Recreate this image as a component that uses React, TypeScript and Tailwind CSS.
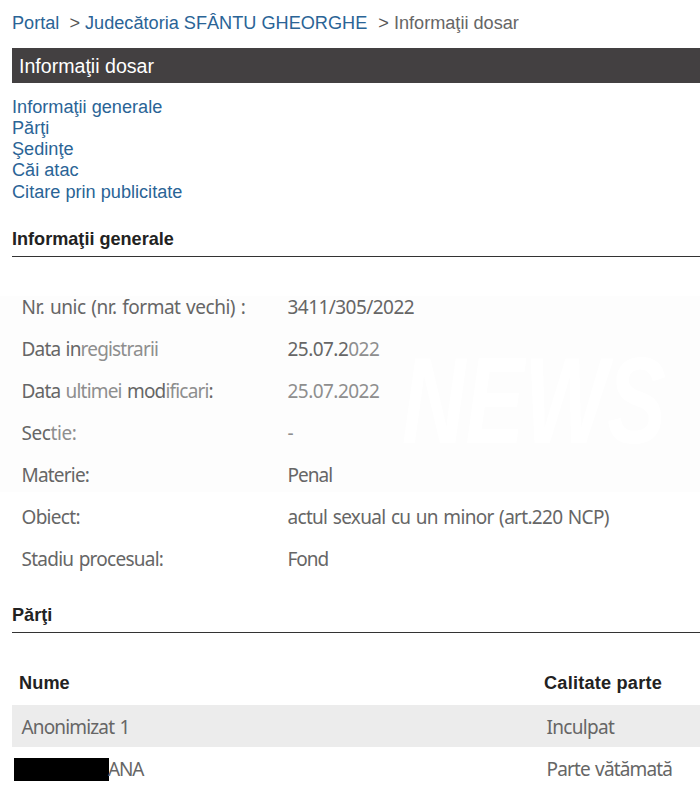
import type { ReactNode } from "react";

const links = ["Informaţii generale", "Părţi", "Şedinţe", "Căi atac", "Citare prin publicitate"];

const Faded = ({ children }: { children: ReactNode }) => <span className="text-[#8e8e8e]">{children}</span>;

type Detail = { label: ReactNode; labelTracking: string; value: ReactNode; valueTracking: string };

const details: Detail[] = [
  {
    label: "Nr. unic (nr. format vechi) :",
    labelTracking: "tracking-[-0.49px]",
    value: "3411/305/2022",
    valueTracking: "tracking-[-0.55px]",
  },
  {
    label: <>Data in<Faded>registrarii</Faded></>,
    labelTracking: "tracking-[-0.82px]",
    value: <>25.07.2<Faded>022</Faded></>,
    valueTracking: "tracking-[-0.54px]",
  },
  {
    label: <>Data <Faded>ultimei</Faded> mod<Faded>ificari</Faded>:</>,
    labelTracking: "tracking-[-0.82px]",
    value: <Faded>25.07.2022</Faded>,
    valueTracking: "tracking-[-0.54px]",
  },
  {
    label: <>Sec<Faded>tie:</Faded></>,
    labelTracking: "tracking-[-0.4px]",
    value: <Faded>-</Faded>,
    valueTracking: "tracking-normal",
  },
  { label: "Materie:", labelTracking: "tracking-[-0.8px]", value: "Penal", valueTracking: "tracking-[-0.95px]" },
  {
    label: "Obiect:",
    labelTracking: "tracking-[-0.7px]",
    value: "actul sexual cu un minor (art.220 NCP)",
    valueTracking: "tracking-[-0.69px]",
  },
  {
    label: "Stadiu procesual:",
    labelTracking: "tracking-[-0.75px]",
    value: "Fond",
    valueTracking: "tracking-[-1px]",
  },
];

function SectionTitle({ children }: { children: ReactNode }) {
  return (
    <h2 className="ml-3 h-[31px] border-b border-[#333] text-[18.1px] leading-[26px] font-bold text-[#222]">
      {children}
    </h2>
  );
}

export default function App() {
  return (
    <main className="relative h-[800px] w-[700px] overflow-hidden bg-white font-['Liberation_Sans',Arial,sans-serif] text-[18.15px] text-[#666]">
      <div aria-hidden="true" className="absolute top-[296px] left-0 h-[196px] w-full bg-[#fdfdfd]">
        <span className="absolute top-[50px] left-[402px] scale-y-[1.4] text-[88px] leading-[110px] font-bold text-white italic">
          NEWS
        </span>
      </div>
      <div className="relative">
        <nav className="flex h-[47px] items-center pl-3 whitespace-pre text-[#2a6496]">
          <a>Portal</a>
          <span className="ml-[10px] text-[#555]">&gt;</span>
          <a className="ml-[5px]">Judecătoria SFÂNTU GHEORGHE</a>
          <span className="ml-[11px] text-[#555]">&gt;</span>
          <span className="ml-[5px] text-[#666]">Informaţii dosar</span>
        </nav>
        <h1 className="mt-px ml-3 h-[35px] bg-[#434041] pl-[7px] text-[19.6px] leading-[36px] text-white">
          Informaţii dosar
        </h1>
        <ul className="mt-[14px] ml-3 h-[105px] text-[#2a6496]">
          {links.map((l) => (
            <li key={l} className="h-[21.15px] leading-[21.15px]">{l}</li>
          ))}
        </ul>
        <div className="mt-[24px]"><SectionTitle>Informaţii generale</SectionTitle></div>
        <dl className="mt-[29.5px] ml-[21.5px] h-[293.5px] font-['Noto_Sans',sans-serif] text-[19px] [word-spacing:1.2px]">
          {details.map((d, i) => (
            <div key={i} className="flex h-[41.95px] items-center whitespace-nowrap">
              <dt className={`w-[266px] ${d.labelTracking}`}>{d.label}</dt>
              <dd className={d.valueTracking}>{d.value}</dd>
            </div>
          ))}
        </dl>
        <div className="mt-[22px]"><SectionTitle>Părţi</SectionTitle></div>
        <div className="mt-[29px] ml-3">
          <div className="flex h-[43px] items-center pt-px pl-[7px] font-bold text-[#222]">
            <div className="w-[525px] tracking-[0.1px]">Nume</div>
            <div className="tracking-[0.22px]">Calitate parte</div>
          </div>
          <div className="flex h-[42px] items-center bg-[#ececec] pt-[3px] pl-[9.5px] font-['Noto_Sans',sans-serif] text-[19px]">
            <div className="w-[525px] tracking-[-0.85px] [word-spacing:1.2px]">Anonimizat 1</div>
            <div className="tracking-[-0.7px]">Inculpat</div>
          </div>
          <div className="flex h-[44px] items-center pl-[2px] font-['Noto_Sans',sans-serif] text-[19px]">
            <div className="flex w-[532.5px] items-center">
              <span className="h-[23px] w-[95px] bg-black" />
              <span className="ml-[-1px] tracking-[-1.2px]">ANA</span>
            </div>
            <div className="tracking-[-0.85px] [word-spacing:1.2px]">Parte vătămată</div>
          </div>
        </div>
      </div>
    </main>
  );
}
